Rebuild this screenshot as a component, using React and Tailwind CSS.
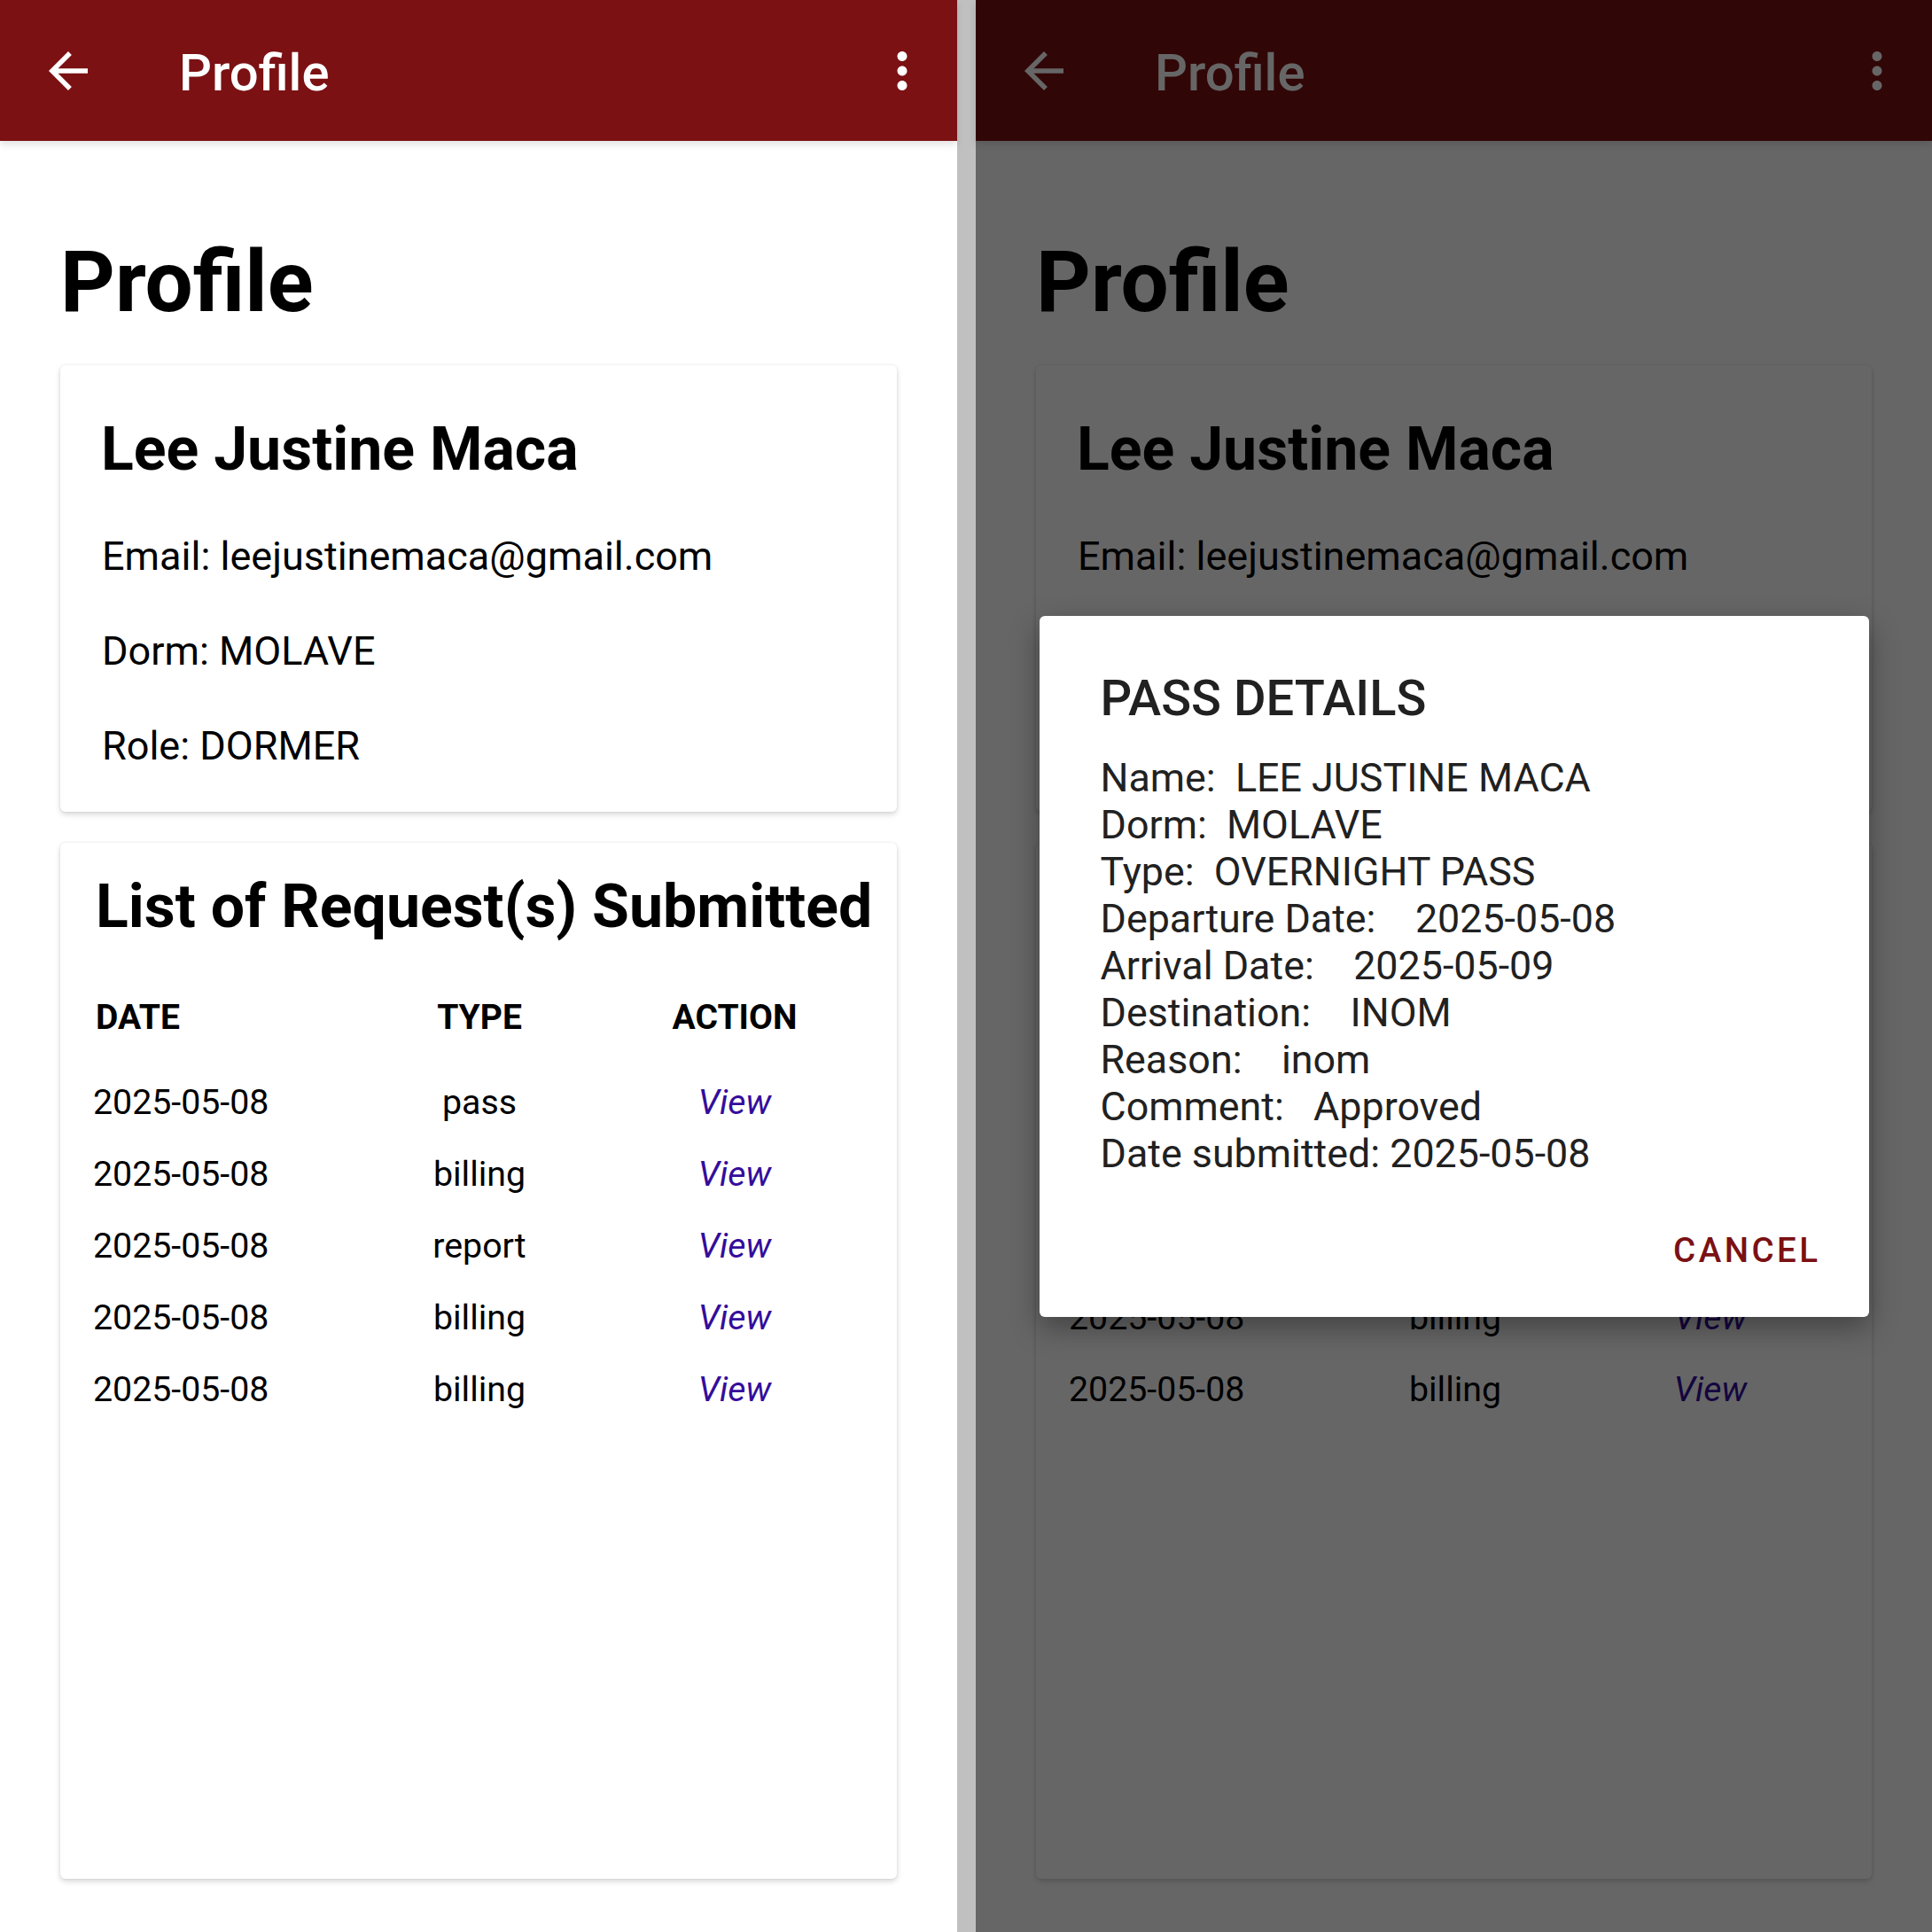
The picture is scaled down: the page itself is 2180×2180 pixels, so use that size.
import React from "react";

const requests = [
    { date: "2025-05-08", type: "pass" },
    { date: "2025-05-08", type: "billing" },
    { date: "2025-05-08", type: "report" },
    { date: "2025-05-08", type: "billing" },
    { date: "2025-05-08", type: "billing" },
];

const passDetails = [
    "Name:  LEE JUSTINE MACA",
    "Dorm:  MOLAVE",
    "Type:  OVERNIGHT PASS",
    "Departure Date:    2025-05-08",
    "Arrival Date:    2025-05-09",
    "Destination:    INOM",
    "Reason:    inom",
    "Comment:   Approved",
    "Date submitted: 2025-05-08",
];

const ArrowBack = () => (
    <svg viewBox="0 0 24 24" className="w-[66px] h-[66px] fill-white">
        <path d="M20 11H7.83l5.59-5.59L12 4l-8 8 8 8 1.41-1.41L7.83 13H20v-2z" />
    </svg>
);

const MoreVert = () => (
    <svg viewBox="0 0 24 24" className="w-[66px] h-[66px] fill-white">
        <path d="M12 8c1.1 0 2-.9 2-2s-.9-2-2-2-2 .9-2 2 .9 2 2 2zm0 2c-1.1 0-2 .9-2 2s.9 2 2 2 2-.9 2-2-.9-2-2-2zm0 6c-1.1 0-2 .9-2 2s.9 2 2 2 2-.9 2-2-.9-2-2-2z" />
    </svg>
);

const cardShadow = "shadow-[0_3px_6px_rgba(0,0,0,0.16),0_0_3px_rgba(0,0,0,0.08)]";

const ProfileScreen = () => (
    <div className="flex flex-col h-full bg-white">
        {/* toolbar */}
        <header className="relative z-10 h-[159px] shrink-0 bg-[#7b1113] flex items-center shadow-[0_4px_8px_rgba(0,0,0,0.12)]">
            <div className="ml-[44px]">
                <ArrowBack />
            </div>
            <span className="ml-[92px] pt-[6px] text-[58px] font-medium text-white">
                Profile
            </span>
            <div className="ml-auto mr-[29px]">
                <MoreVert />
            </div>
        </header>

        <div className="px-[68px]">
            <h1 className="mt-[111px] text-[96px] leading-[96px] font-bold text-black">
                Profile
            </h1>

            {/* user card */}
            <div className={`mt-[46px] rounded-[6px] bg-white pt-[55px] pl-[47px] pb-[48px] ${cardShadow}`}>
                <h2 className="-ml-[1px] text-[68px] leading-[80px] font-bold text-black">
                    Lee Justine Maca
                </h2>
                <div className="mt-[54px] flex flex-col gap-[54px] text-[45px] leading-[53px] text-black">
                    <p>Email: leejustinemaca@gmail.com</p>
                    <p>Dorm: MOLAVE</p>
                    <p>Role: DORMER</p>
                </div>
            </div>

            {/* requests card */}
            <div className={`mt-[35px] h-[1169px] rounded-[6px] bg-white pt-[32px] pl-[37px] ${cardShadow}`}>
                <h2 className="ml-[3px] text-[68px] leading-[80px] font-bold text-black whitespace-nowrap">
                    List of Request(s) Submitted
                </h2>
                <div className="mt-[45px] grid grid-cols-[300px_272px_304px] text-[39px] leading-[81px] font-bold text-black">
                    <div className="pl-[3px]">DATE</div>
                    <div className="text-center">TYPE</div>
                    <div className="text-center">ACTION</div>
                </div>
                <div className="mt-[15px] grid grid-cols-[300px_272px_304px] text-[39.3px] leading-[81px] text-black">
                    {requests.map((r, i) => (
                        <React.Fragment key={i}>
                            <div>{r.date}</div>
                            <div className="text-center">{r.type}</div>
                            <div className="text-center italic text-[#340d9c]">View</div>
                        </React.Fragment>
                    ))}
                </div>
            </div>
        </div>
    </div>
);

const PassDialog = () => (
    <div className="w-[936px] rounded-[6px] bg-white pt-[61px] pb-[51px] shadow-[0_12px_32px_rgba(0,0,0,0.35)]">
        <h3 className="pl-[69px] text-[56px] leading-[64px] font-medium text-[#212121]">
            PASS DETAILS
        </h3>
        <div className="mt-[31px] pl-[69px] text-[44.8px] leading-[53px] text-[#212121]">
            {passDetails.map((line) => (
                <p key={line} className="whitespace-pre">{line}</p>
            ))}
        </div>
        <div className="mt-[59px] flex justify-end pr-[54px]">
            <span className="text-[38.5px] leading-[48px] font-medium tracking-[0.09em] text-[#7b1113]">
                CANCEL
            </span>
        </div>
    </div>
);

export default function App() {
    return (
        <div className="flex w-[2180px] h-[2180px] overflow-hidden font-['Roboto',sans-serif]">
            <div className="w-[1080px] shrink-0 h-full">
                <ProfileScreen />
            </div>
            <div className="w-[21px] shrink-0 bg-[#c0c0c0]" />
            <div className="relative flex-1 h-full">
                <ProfileScreen />
                <div className="absolute inset-0 z-20 bg-black/60 flex items-center justify-center">
                    <PassDialog />
                </div>
            </div>
        </div>
    );
}
